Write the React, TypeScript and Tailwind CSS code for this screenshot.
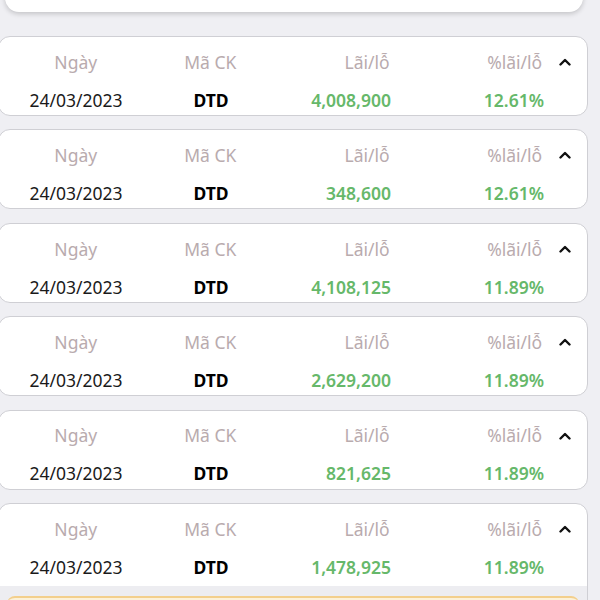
import React from "react";

const rows = [
  { v: "4,008,900", p: "12.61%" },
  { v: "348,600", p: "12.61%" },
  { v: "4,108,125", p: "11.89%" },
  { v: "2,629,200", p: "11.89%" },
  { v: "821,625", p: "11.89%" },
  { v: "1,478,925", p: "11.89%" },
];

function Chevron() {
  return (
    <svg width="12" height="8" viewBox="0 0 12 8" className="block">
      <polyline points="1.5,6.5 6,2 10.5,6.5" fill="none" stroke="#111" strokeWidth="2.4" strokeLinecap="round" strokeLinejoin="round" />
    </svg>
  );
}

function Header({ r }: { r: { v: string; p: string } }) {
  return (
    <div className="flex flex-col">
      <div className="flex h-[50px] items-center text-[17.5px] text-[#b9abae]">
        <div className="w-[150px] text-center">Ngày</div>
        <div className="w-[120px] text-center">Mã CK</div>
        <div className="w-[120px] text-right">Lãi/lỗ</div>
        <div className="w-[153px] text-right">%lãi/lỗ</div>
        <div className="flex w-[45px] justify-center pl-[1px]">
          <Chevron />
        </div>
      </div>
      <div className="flex h-[26px] items-center text-[17.5px]">
        <div className="w-[150px] text-center text-[#1a1a1a]">24/03/2023</div>
        <div className="w-[120px] text-center font-bold text-black">DTD</div>
        <div className="w-[120px] text-right font-semibold text-[#66b86a]">{r.v}</div>
        <div className="w-[153px] text-right font-semibold text-[#66b86a]">{r.p}</div>
      </div>
    </div>
  );
}

export default function App() {
  return (
    <div
      className="flex h-[600px] w-[600px] flex-col overflow-hidden bg-[#efeff3]"
      style={{ fontFamily: '"Noto Sans", "Open Sans", sans-serif' }}
    >
      <div className="ml-[5px] mt-[-20px] h-[32px] w-[578px] shrink-0 rounded-b-[14px] bg-white shadow-[0_2px_5px_rgba(0,0,0,0.18)]" />
      <div className="mt-[24px] flex flex-col gap-[13.4px]">
        {rows.slice(0, 5).map((r, i) => (
          <div key={i} className="-ml-[2px] h-[80px] w-[590px] rounded-[12px] border border-[#cfcfd4] bg-white">
            <div className="ml-[2px]">
              <Header r={r} />
            </div>
          </div>
        ))}
        <div className="-ml-[2px] h-[120px] w-[590px] rounded-t-[12px] border border-[#cfcfd4] bg-white">
          <div className="ml-[2px] h-[82px]">
            <Header r={rows[5]} />
          </div>
          <div className="bg-[#ededf1] px-[8px] pt-[10px]">
            <div className="h-[40px] rounded-t-[8px] border-t-2 border-[#f3cf8c] bg-[#fcf1d8]" />
          </div>
        </div>
      </div>
    </div>
  );
}
